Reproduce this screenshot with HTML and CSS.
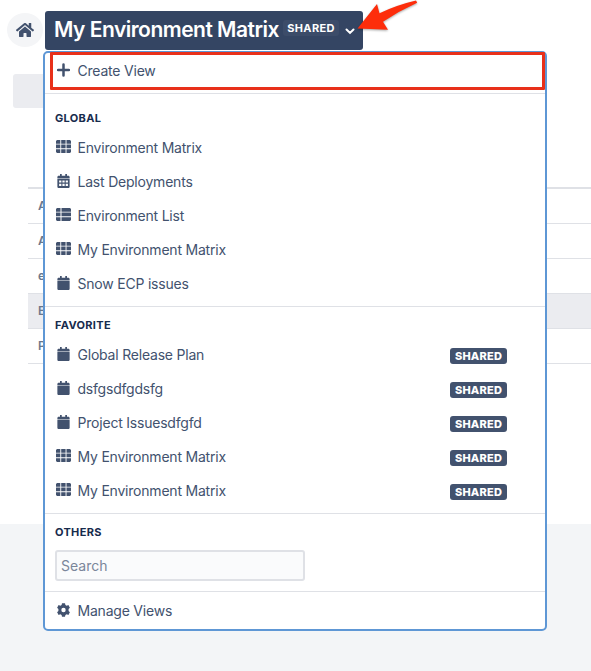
FILE: index.html
```html
<!DOCTYPE html>
<html lang="en">
<head>
<meta charset="utf-8">
<title>My Environment Matrix</title>
<link rel="stylesheet" href="styles.css">
</head>
<body>
<svg width="0" height="0" class="defs">
  <symbol id="grid" viewBox="0 0 15 13"><path d="M1 0h3.300v3.700H0V1zM5.200 0h4.400v3.700H5.200zM10.500 0H14l1 1v2.700h-4.500zM0 4.600h4.300v3.700H0zM5.200 4.600h4.400v3.700H5.200zM10.500 4.600H15v3.700h-4.500zM0 9.200h4.300V13H1l-1-1zM5.200 9.200h4.400V13H5.200zM10.500 9.200H15V12l-1 1h-3.500z"/></symbol>
  <symbol id="list" viewBox="0 0 15 13"><path d="M1 0h3.500v3.700H0V1zM5.500 0H14l1 1v2.700H5.500zM0 4.600h4.500v3.700H0zM5.500 4.600H15v3.700H5.500zM0 9.200h4.500V13H1l-1-1zM5.500 9.200H15V12l-1 1H5.500z"/></symbol>
  <symbol id="cal" viewBox="0 0 448 512"><path d="M12 184h424c7 0 12 5 12 12v268c0 27-21 48-48 48H48c-27 0-48-21-48-48V196c0-7 5-12 12-12zm436-32v-40c0-27-21-48-48-48h-48V12c0-7-5-12-12-12h-40c-7 0-12 5-12 12v52H160V12c0-7-5-12-12-12h-40c-7 0-12 5-12 12v52H48C21 64 0 85 0 112v40c0 7 5 12 12 12h424c7 0 12-5 12-12z"/></symbol>
  <symbol id="calgrid" viewBox="0 0 448 512"><path fill-rule="evenodd" d="M0 184h448v280c0 27-21 48-48 48H48c-27 0-48-21-48-48zm64 50v78h82v-78zm120 0v78h82v-78zm120 0v78h82v-78zM64 360v78h82v-78zm120 0v78h82v-78zm120 0v78h82v-78zM448 160v-48c0-27-21-48-48-48h-48V12c0-7-5-12-12-12h-40c-7 0-12 5-12 12v52H160V12c0-7-5-12-12-12h-40c-7 0-12 5-12 12v52H48C21 64 0 85 0 112v48z"/></symbol>
</svg>
<main class="page">
  <header class="bar">
    <a class="home"><svg width="20" height="16" viewBox="0 0 576 512"><path d="M280 148 96 300v164c0 9 7 16 16 16h112c9 0 16-7 16-16v-96c0-9 7-16 16-16h64c9 0 16 7 16 16v96c0 9 7 16 16 16h112c9 0 16-7 16-16V300L296 148c-5-4-11-4-16 0zM572 251l-84-69V44c0-7-5-12-12-12h-56c-7 0-12 5-12 12v72l-90-74c-17-14-43-14-60 0L4 251c-5 4-5 12-1 17l25 31c5 5 12 6 17 2L280 107c5-4 11-4 16 0l235 194c5 4 12 3 17-2l25-31c4-5 4-13-1-17z"/></svg></a>
    <button class="title"><span class="title-text">My Environment Matrix</span><span class="title-tag">SHARED</span><svg class="chev" width="10" height="7" viewBox="0 0 10 7"><path d="M1.500 1.500 5 4.900l3.500-3.400"/></svg></button>
  </header>
  <div class="tool"></div>
  <div class="table">
    <div class="row">A</div>
    <div class="row">A</div>
    <div class="row">e</div>
    <div class="row active">E</div>
    <div class="row">P</div>
  </div>
</main>
<nav class="menu">
  <section class="group first">
    <div class="item"><svg class="ico plus" viewBox="0 0 13 14"><path d="M6.500 1.500v11M1 7h11"/></svg><span>Create View</span></div>
  </section>
  <section class="group global">
    <h2>GLOBAL</h2>
    <div class="item"><svg class="ico wide"><use href="#grid"/></svg><span>Environment Matrix</span></div>
    <div class="item"><svg class="ico"><use href="#calgrid"/></svg><span>Last Deployments</span></div>
    <div class="item"><svg class="ico wide"><use href="#list"/></svg><span>Environment List</span></div>
    <div class="item"><svg class="ico wide"><use href="#grid"/></svg><span>My Environment Matrix</span></div>
    <div class="item"><svg class="ico"><use href="#cal"/></svg><span>Snow ECP issues</span></div>
  </section>
  <section class="group">
    <h2>FAVORITE</h2>
    <div class="item"><svg class="ico"><use href="#cal"/></svg><span>Global Release Plan</span><b class="tag">SHARED</b></div>
    <div class="item"><svg class="ico"><use href="#cal"/></svg><span>dsfgsdfgdsfg</span><b class="tag">SHARED</b></div>
    <div class="item"><svg class="ico"><use href="#cal"/></svg><span>Project Issuesdfgfd</span><b class="tag">SHARED</b></div>
    <div class="item"><svg class="ico wide"><use href="#grid"/></svg><span>My Environment Matrix</span><b class="tag">SHARED</b></div>
    <div class="item"><svg class="ico wide"><use href="#grid"/></svg><span>My Environment Matrix</span><b class="tag">SHARED</b></div>
  </section>
  <section class="group others">
    <h2>OTHERS</h2>
    <input class="search" type="text" placeholder="Search">
  </section>
  <section class="group last">
    <div class="item"><svg class="ico" viewBox="0.500 0.200 13 13.600"><path fill-rule="evenodd" d="M5.500.3h3l.4 1.700 1.300.7 1.700-.6 1.500 2.600-1.300 1.200v2.200l1.300 1.200-1.500 2.600-1.700-.6-1.300.7-.4 1.700h-3L5.100 12l-1.300-.7-1.700.6L.6 9.300l1.300-1.200V5.900L.6 4.700l1.500-2.600 1.700.6L5.100 2zM7 4.800a2.200 2.200 0 1 0 0 4.400 2.200 2.200 0 0 0 0-4.400z"/></svg><span>Manage Views</span></div>
  </section>
</nav>
<div class="highlight"></div>
<svg class="arrow" width="64" height="36" viewBox="0 0 64 36"><path d="M1.500 28.500 21 4l2.500 9.300Q41 5 60 .6L61.200 2.800Q43 11 27 21.800l5 8z"/></svg>
</body>
</html>
```
FILE: styles.css
```css
* { box-sizing: border-box; }
body {
  margin: 0;
  height: 671px;
  overflow: hidden;
  background: #f3f5f7;
  color: #42526e;
  font: 14px/20px Inter, "Liberation Sans", sans-serif;
}
.defs { position: absolute; }
.page { height: 524px; background: #fff; padding-top: 11px; }
.bar { display: flex; gap: 2px; padding-left: 7px; height: 39px; }
.home {
  width: 36px;
  height: 34px;
  margin-top: 2px;
  border-radius: 50%;
  background: #f4f5f7;
  display: flex;
  align-items: center;
  justify-content: center;
  fill: #42526e;
}
.title {
  display: flex;
  align-items: center;
  width: 318px;
  height: 39px;
  padding: 0 0 0 9px;
  border: 0;
  border-radius: 3px;
  background: #344563;
  color: #fff;
  font-family: inherit;
}
.title-text {
  flex: none;
  width: 229px;
  text-align: left;
  white-space: nowrap;
  font-size: 21px;
  font-weight: 560;
  line-height: 36px;
  letter-spacing: -0.5px;
  padding-bottom: 2px;
}
.title-tag {
  flex: none;
  width: 56px;
  height: 16px;
  margin-top: -5px;
  border-radius: 3px;
  background: #3c4c69;
  text-align: center;
  font-size: 11px;
  font-weight: 700;
  line-height: 16px;
  letter-spacing: 0.3px;
}
.chev { flex: none; margin: 2px 0 0 6px; fill: none; stroke: #fff; stroke-width: 2; stroke-linecap: round; }
.tool { width: 100px; height: 34px; margin: 24px 0 0 13px; border-radius: 3px; background: #ebecf0; }
.table { margin: 79px 0 0 28px; border-top: 2px solid #dfe1e6; }
.row {
  height: 35px;
  padding-left: 10px;
  border-bottom: 1px solid #dfe1e6;
  color: #6b778c;
  font-size: 12px;
  font-weight: 600;
  line-height: 34px;
}
.active { background: #ebecf0; }
.menu {
  position: absolute;
  left: 43px;
  top: 51px;
  width: 504px;
  height: 580px;
  border: 2px solid #5e97d5;
  border-radius: 5px;
  background: #fff;
}
.group { padding: 9px 0 5px; border-bottom: 1px solid #dfe1e6; }
.first { padding-top: 1px; }
.global { padding-top: 15px; }
.others { padding-bottom: 10px; }
.last { padding: 2px 0 0; border: 0; }
h2 {
  margin: 0 0 4px 10px;
  color: #172b4d;
  font-size: 11px;
  font-weight: 700;
  line-height: 18px;
  letter-spacing: 0.32px;
}
.item { display: flex; align-items: center; height: 34px; padding: 0 38px 0 10px; }
.item span { margin-left: 5.500px; letter-spacing: -0.21px; }
.ico { width: 13px; height: 14px; margin: 0 2px; position: relative; top: -1px; fill: #42526e; }
.wide { width: 15px; height: 13px; margin: 0 1px; top: -1.500px; }
.plus { stroke: #42526e; stroke-width: 2.500; stroke-linecap: round; }
.tag {
  width: 57px;
  height: 16px;
  margin: 2px 0 0 auto;
  border-radius: 3px;
  background: #42526e;
  color: #fff;
  text-align: center;
  font-size: 11px;
  font-weight: 800;
  line-height: 16px;
  letter-spacing: 0.2px;
}
.search {
  display: block;
  width: 250px;
  height: 31px;
  margin: 9px 0 0 10px;
  padding: 0 4px;
  border: 2px solid #dfe1e6;
  border-radius: 3px;
  background: #fafbfc;
  font: inherit;
}
.search::placeholder { color: #7a869a; opacity: 1; }
.highlight {
  position: absolute;
  left: 50px;
  top: 52px;
  width: 495px;
  height: 38px;
  border: 3px solid #e8301a;
  border-radius: 1px;
}
.arrow { position: absolute; left: 356px; top: 0; fill: #fd2d0b; filter: drop-shadow(0 1px 1px rgba(0, 0, 0, 0.35)); }
```
